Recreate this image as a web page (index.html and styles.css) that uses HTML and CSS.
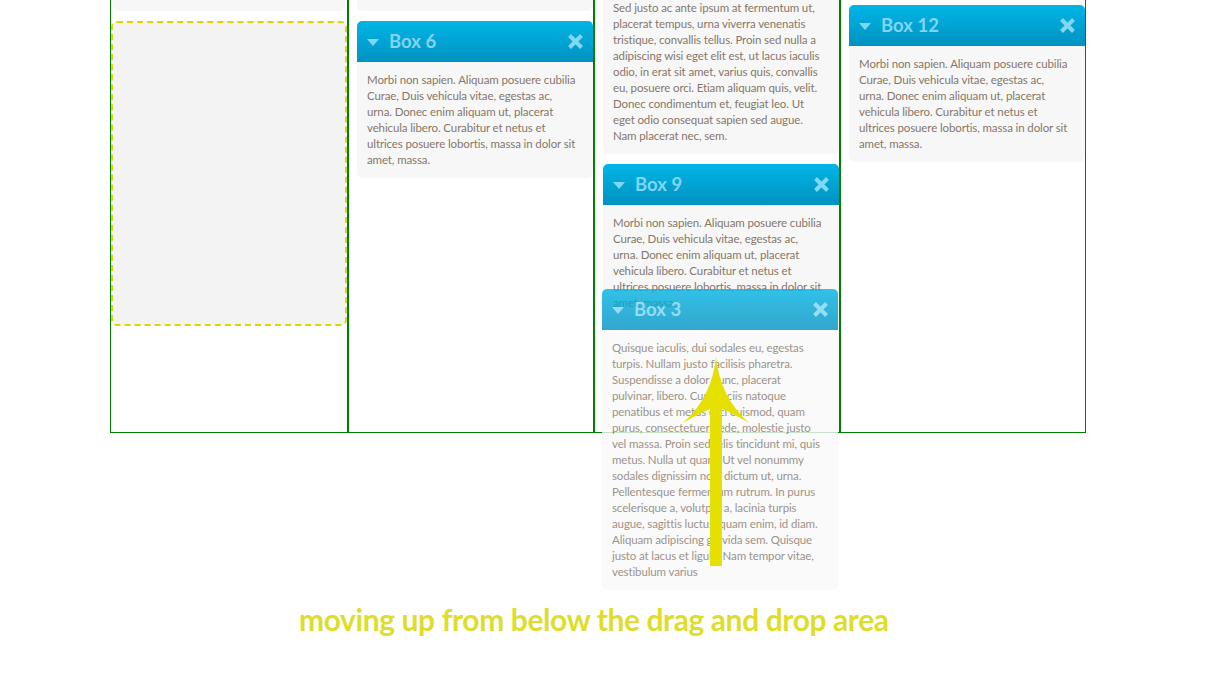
FILE: index.html
```html
<!DOCTYPE html>
<html>
<head>
<meta charset="utf-8">
<link rel="stylesheet" href="styles.css">
</head>
<body>
<div class="stage">
  <div class="columns">
    <div class="col col-first">
      <div class="box box-stub"><div class="box-body stub"></div></div>
      <div class="placeholder"></div>
    </div>
    <div class="col">
      <div class="box box-stub"><div class="box-body stub"></div></div>
      <div class="box">
        <div class="box-head"><span class="tri"></span><span class="title">Box 6</span><svg class="close" width="17" height="17" viewBox="0 0 17 17"><path d="M2.5 2.5 L14.5 14.5 M14.5 2.5 L2.5 14.5"/></svg></div>
        <p class="box-body">Morbi non sapien. Aliquam posuere cubilia<br>Curae, Duis vehicula vitae, egestas ac,<br>urna. Donec enim aliquam ut, placerat<br>vehicula libero. Curabitur et netus et<br>ultrices posuere lobortis, massa in dolor sit<br>amet, massa.</p>
      </div>
    </div>
    <div class="col">
      <div class="box">
        <p class="box-body cut">Sed justo ac ante ipsum at fermentum ut,<br>placerat tempus, urna viverra venenatis<br>tristique, convallis tellus. Proin sed nulla a<br>adipiscing wisi eget elit est, ut lacus iaculis<br>odio, in erat sit amet, varius quis, convallis<br>eu, posuere orci. Etiam aliquam quis, velit.<br>Donec condimentum et, feugiat leo. Ut<br>eget odio consequat sapien sed augue.<br>Nam placerat nec, sem.</p>
      </div>
      <div class="box">
        <div class="box-head"><span class="tri"></span><span class="title">Box 9</span><svg class="close" width="17" height="17" viewBox="0 0 17 17"><path d="M2.5 2.5 L14.5 14.5 M14.5 2.5 L2.5 14.5"/></svg></div>
        <p class="box-body">Morbi non sapien. Aliquam posuere cubilia<br>Curae, Duis vehicula vitae, egestas ac,<br>urna. Donec enim aliquam ut, placerat<br>vehicula libero. Curabitur et netus et<br>ultrices posuere lobortis, massa in dolor sit<br>amet, massa.</p>
      </div>
    </div>
    <div class="col col-last">
      <div class="box">
        <div class="box-head"><span class="tri"></span><span class="title">Box 12</span><svg class="close" width="17" height="17" viewBox="0 0 17 17"><path d="M2.5 2.5 L14.5 14.5 M14.5 2.5 L2.5 14.5"/></svg></div>
        <p class="box-body">Morbi non sapien. Aliquam posuere cubilia<br>Curae, Duis vehicula vitae, egestas ac,<br>urna. Donec enim aliquam ut, placerat<br>vehicula libero. Curabitur et netus et<br>ultrices posuere lobortis, massa in dolor sit<br>amet, massa.</p>
      </div>
    </div>
  </div>

  <div class="box dragging">
    <div class="box-head"><span class="tri"></span><span class="title">Box 3</span><svg class="close" width="17" height="17" viewBox="0 0 17 17"><path d="M2.5 2.5 L14.5 14.5 M14.5 2.5 L2.5 14.5"/></svg></div>
    <p class="box-body">Quisque iaculis, dui sodales eu, egestas<br>turpis. Nullam justo facilisis pharetra.<br>Suspendisse a dolor nunc, placerat<br>pulvinar, libero. Cum sociis natoque<br>penatibus et metus orci euismod, quam<br>purus, consectetuer pede, molestie justo<br>vel massa. Proin sed felis tincidunt mi, quis<br>metus. Nulla ut quam. Ut vel nonummy<br>sodales dignissim non, dictum ut, urna.<br>Pellentesque fermentum rutrum. In purus<br>scelerisque a, volutpat a, lacinia turpis<br>augue, sagittis luctus, quam enim, id diam.<br>Aliquam adipiscing gravida sem. Quisque<br>justo at lacus et ligula. Nam tempor vitae,<br>vestibulum varius</p>
  </div>

  <svg class="arrow" width="80" height="220" viewBox="0 0 80 220">
    <path d="M36 0 Q32 40 3 66 Q20 56 30 52 L30 209 L42 209 L42 52 Q52 56 69 66 Q40 40 36 0 Z" fill="#e6e000"/>
  </svg>

  <p class="caption">moving up from below the drag and drop area</p>
</div>
</body>
</html>
```

FILE: styles.css
```css
html, body {
  margin: 0;
  padding: 0;
  background: #ffffff;
}

.stage {
  position: relative;
  width: 1209px;
  height: 686px;
  overflow: hidden;
}

.columns {
  display: flex;
  margin-left: 110px;
  width: 976px;
  height: 433px;
}

.col {
  box-sizing: border-box;
  width: 246px;
  height: 433px;
  border: 1px solid #008000;
  border-top: none;
  padding-left: 8px;
}

.col-first {
  width: 238px;
  padding-left: 0;
}

.col-last {
  padding-top: 5px;
}

.box {
  width: 236px;
  margin-bottom: 10px;
  font-family: "Lato", "DejaVu Sans", sans-serif;
}

.box-head {
  display: flex;
  align-items: center;
  height: 41px;
  padding: 0 9px 0 10px;
  box-sizing: border-box;
  border-radius: 5px 5px 0 0;
  background: linear-gradient(#00b5e6, #0092c1);
  color: #7ed6f3;
}

.tri {
  width: 0;
  height: 0;
  border-left: 6px solid transparent;
  border-right: 6px solid transparent;
  border-top: 7px solid #7ed6f3;
  margin-right: 10px;
  margin-top: 1px;
}

.title {
  flex: 1;
  font-weight: bold;
  font-size: 18.5px;
  margin-top: -2px;
}

.close {
  display: block;
  stroke: #80d8f5;
  stroke-width: 4;
  stroke-linecap: butt;
  fill: none;
}

.box-body {
  margin: 0;
  padding: 10px 10px;
  background: #f7f7f7;
  border-radius: 0 0 6px 6px;
  font-size: 11.5px;
  letter-spacing: -0.12px;
  line-height: 16px;
  color: #86786a;
  white-space: nowrap;
}

.box-body.cut {
  padding-top: 0;
}

.box-body.stub {
  height: 11px;
  padding: 0;
}

.box-stub {
  margin-bottom: 10px;
}

.col-first .box-stub {
  margin-left: 2px;
  width: 232px;
}

.placeholder {
  box-sizing: border-box;
  width: 236px;
  height: 305px;
  border: 2px dashed #ddd600;
  border-radius: 6px;
  background: #f3f3f3;
}

.dragging {
  position: absolute;
  left: 602px;
  top: 289px;
  opacity: 0.8;
  margin: 0;
}

.dragging .box-body {
  background: #f9f9f9;
}

.arrow {
  position: absolute;
  left: 680px;
  top: 357px;
}

.caption {
  margin: 0;
  padding-top: 169px;
  padding-left: 299px;
  font-family: "Lato", "DejaVu Sans", sans-serif;
  font-weight: bold;
  font-size: 30px;
  letter-spacing: -0.4px;
  color: #dedd2c;
  line-height: 34px;
}
```
